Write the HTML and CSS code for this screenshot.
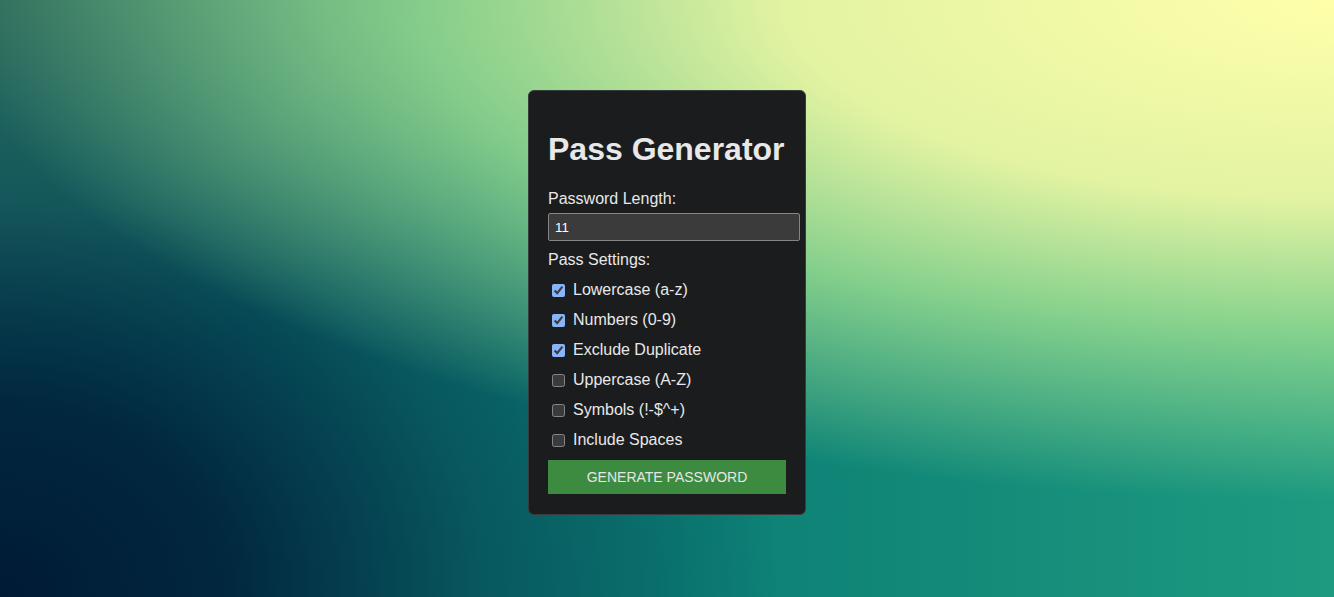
FILE: index.html
```html
<!DOCTYPE html>
<html lang="en">
<head>
<meta charset="utf-8">
<title>Pass Generator</title>
<link rel="stylesheet" href="styles.css">
</head>
<body>
<main class="card">
  <h1 class="title">Pass Generator</h1>
  <label class="field-label" for="len">Password Length:</label>
  <input class="length-input" id="len" type="number" value="11">
  <div class="field-label settings-label">Pass Settings:</div>
  <div class="options">
    <label class="option"><input type="checkbox" checked><span>Lowercase (a-z)</span></label>
    <label class="option"><input type="checkbox" checked><span>Numbers (0-9)</span></label>
    <label class="option"><input type="checkbox" checked><span>Exclude Duplicate</span></label>
    <label class="option"><input type="checkbox"><span>Uppercase (A-Z)</span></label>
    <label class="option"><input type="checkbox"><span>Symbols (!-$^+)</span></label>
    <label class="option"><input type="checkbox"><span>Include Spaces</span></label>
  </div>
  <button class="generate" type="button">Generate Password</button>
</main>
</body>
</html>
```
FILE: styles.css
```css
html, body {
  margin: 0;
  height: 100%;
}
body {
  color-scheme: dark;
  font-family: "Liberation Sans", Arial, sans-serif;
  display: flex;
  justify-content: center;
  align-items: flex-start;
  padding-top: 90px;
  box-sizing: border-box;
  background:
    radial-gradient(ellipse 1380px 500px at 100% 0%, #ffffaa 0%, rgba(226,243,162,1) 40%, rgba(160,225,145,.8) 66%, rgba(110,200,140,0) 100%),
    radial-gradient(ellipse 780px 660px at 0% 100%, #001a35 0%, rgba(0,32,58,.9) 30%, rgba(5,60,80,.55) 62%, rgba(5,60,80,0) 100%),
    radial-gradient(ellipse 560px 360px at 0% 0%, rgba(50,112,92,.95), rgba(70,140,105,.5) 60%, rgba(70,140,105,0)),
    linear-gradient(to right, #0d6f6c 0%, #0b7e74 50%, #1d9a80 100%);
}
.card {
  width: 238px;
  padding: 19px 19px 20px;
  background: #1b1c1e;
  border: 1px solid #3a3b3d;
  border-radius: 6px;
  color: #e8e8e8;
}
.title {
  font-size: 32px;
  font-weight: bold;
  margin: 21px 0 22px;
  color: #e8e8e8;
  line-height: 37px;
  white-space: nowrap;
}
.field-label {
  display: block;
  font-size: 16px;
  line-height: 18px;
}
.settings-label {
  margin-bottom: 6px;
}
.length-input {
  display: block;
  width: 100%;
  height: 14px;
  margin: 5px 0 10px;
  padding: 6px 6px;
  border: 1px solid #858585;
  background: #3b3b3b;
  color: #fff;
  font-family: "Liberation Sans", Arial, sans-serif;
  font-size: 13.333px;
  border-radius: 2px;
  -moz-appearance: textfield;
}
.length-input::-webkit-outer-spin-button,
.length-input::-webkit-inner-spin-button {
  -webkit-appearance: none;
  margin: 0;
}
.options {
  display: flex;
  flex-direction: column;
}
.option {
  display: flex;
  align-items: center;
  height: 30px;
  font-size: 16px;
}
.option input {
  width: 13px;
  height: 13px;
  margin: 0 8px 0 4px;
  accent-color: #8ab4f8;
}
.generate {
  display: block;
  width: 100%;
  height: 34px;
  margin-top: 5px;
  border: none;
  background: #3d8b40;
  color: #e6e6e6;
  font-family: "Liberation Sans", Arial, sans-serif;
  font-size: 14px;
  text-transform: uppercase;
  cursor: pointer;
}
```
